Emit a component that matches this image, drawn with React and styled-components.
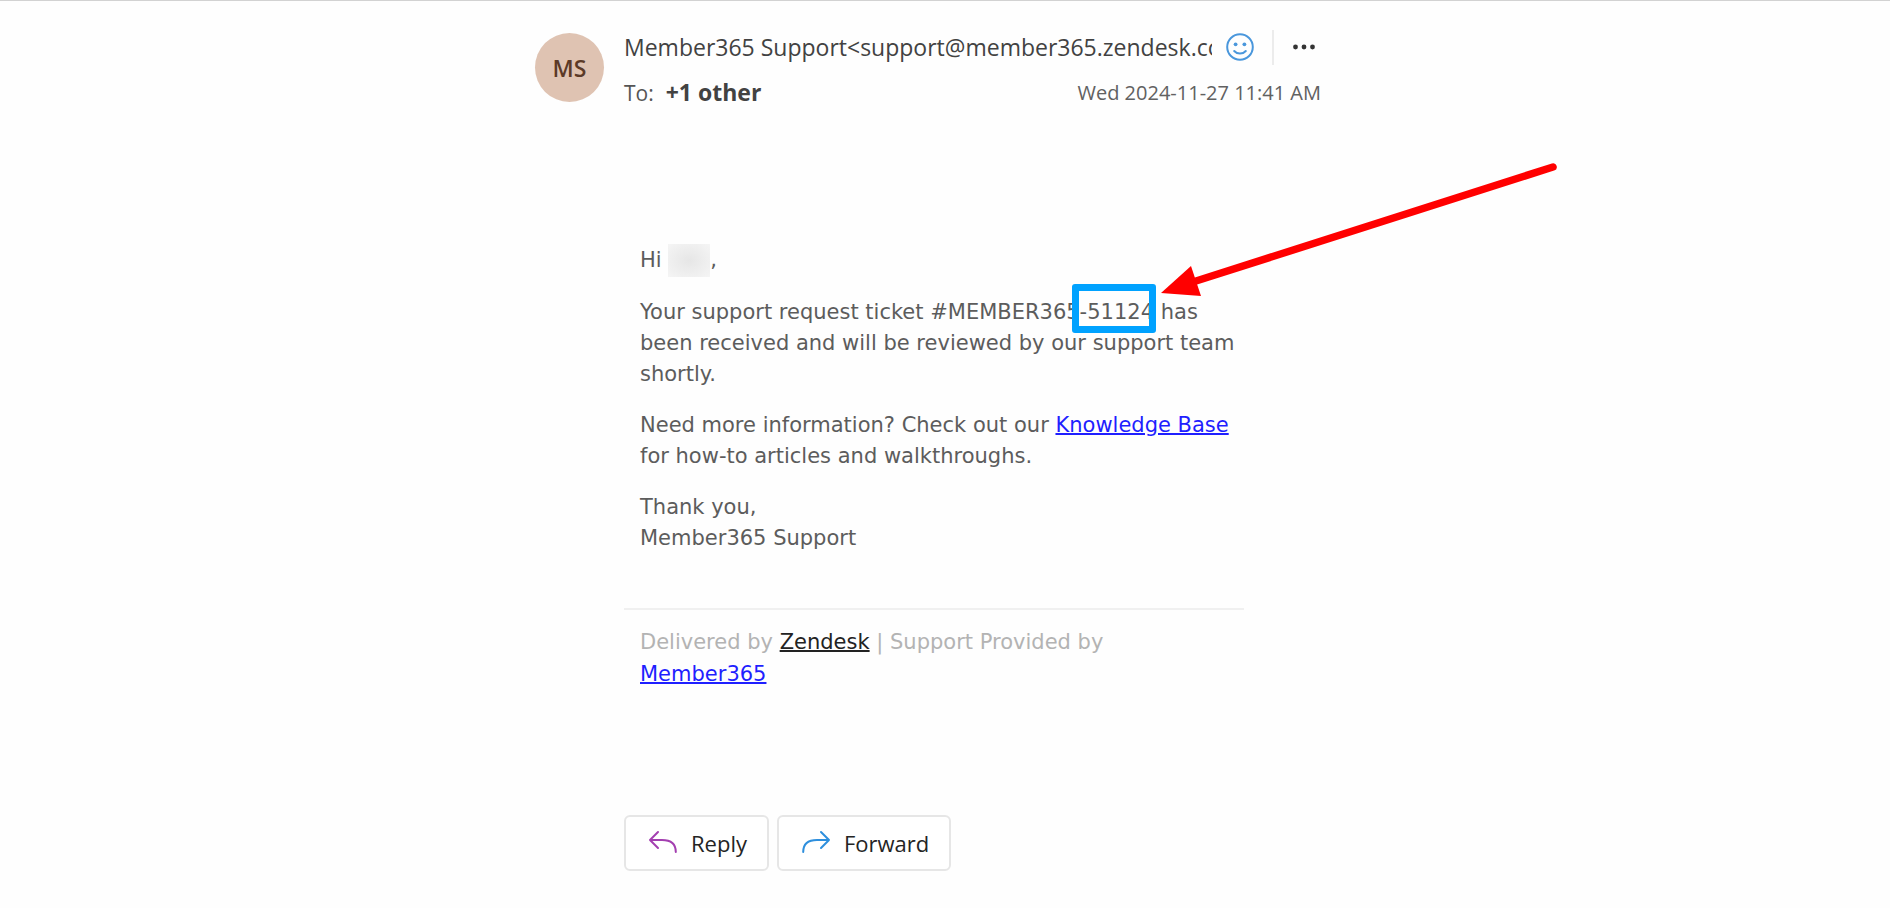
import React from 'react';
import styled, { createGlobalStyle } from 'styled-components';

const GlobalStyle = createGlobalStyle`
  * {
    box-sizing: border-box;
  }
  body {
    margin: 0;
    background-color: #fefefe;
    font-family: "Open Sans", "Noto Sans", sans-serif;
  }
`;

const Page = styled.main`
  display: flex;
  justify-content: center;
  min-height: 100vh;
  padding: 25px 34px 34px 0;
  border-top: 1px solid #d2d2d2;
`;

const Message = styled.article`
  display: grid;
  grid-template-columns: 69px minmax(0, 1fr);
  column-gap: 20px;
  width: 100%;
  max-width: 786px;
  align-content: start;
`;

const Avatar = styled.div`
  display: flex;
  align-items: center;
  justify-content: center;
  width: 69px;
  height: 69px;
  margin-top: 7px;
  border-radius: 50%;
  background-color: #dfc3b2;
  color: #5c3a27;
  font-size: 23px;
  font-weight: 600;
`;

const Header = styled.header`
  display: flex;
  flex-direction: column;
  gap: 3px;
`;

const HeaderRow = styled.div`
  display: flex;
  align-items: center;
  justify-content: space-between;
  height: 42px;
`;

const Sender = styled.h1`
  flex: 1;
  min-width: 0;
  margin: 0;
  overflow: hidden;
  color: #424242;
  font-size: 23px;
  font-weight: 400;
  line-height: 32px;
  white-space: nowrap;
`;

const IconButton = styled.button`
  display: flex;
  padding: 0;
  border: 0;
  background: none;
`;

const Actions = styled.div`
  display: flex;
  align-items: center;
  gap: 18px;
  height: 35px;
  padding-left: 14px;
  padding-right: 5px;
`;

const Divider = styled.span`
  width: 2px;
  height: 35px;
  background-color: #ececec;
`;

const Recipients = styled.p`
  display: flex;
  align-items: baseline;
  gap: 12px;
  margin: 0;
  color: #555555;
  font-size: 21px;

  strong {
    color: #424242;
    font-size: 23px;
  }
`;

const Sent = styled.time`
  color: #616161;
  font-size: 20px;
`;

const Content = styled.div`
  grid-column: 2;
  max-width: 620px;
  margin-top: 132px;
  color: #5c5c5c;
  font-family: "DejaVu Sans", sans-serif;
  font-size: 21px;
  line-height: 31px;
`;

const Paragraph = styled.p`
  margin: 0 8px 20px 16px;
`;

const Redacted = styled.span`
  display: inline-block;
  width: 42px;
  height: 33px;
  margin: -2px 0 0;
  vertical-align: middle;
  background: radial-gradient(#e6e6e6, #f5f5f5);
`;

const Ticket = styled.span`
  position: relative;
`;

const Highlight = styled.span`
  position: absolute;
  inset: -16px -2px -9px -15px;
  border: 7px solid #00a2ff;
  border-radius: 3px;
`;

const Arrow = styled.svg`
  position: absolute;
  left: calc(100% + 7px);
  bottom: 27px;
`;

const Link = styled.a`
  color: ${({ $dark }) => ($dark ? '#222222' : '#1f1fff')};
  text-decoration: underline;
  text-decoration-thickness: 2px;
`;

const Footer = styled.footer`
  margin-top: 54px;
  padding: 16px;
  border-top: 2px solid #f0f0f0;
  color: #b3b3b3;
  line-height: 32px;
`;

const Replies = styled.div`
  display: flex;
  grid-column: 2;
  gap: 8px;
  margin-top: 109px;
`;

const ReplyButton = styled.button`
  display: flex;
  align-items: center;
  gap: 13px;
  height: 56px;
  padding: 0 20px 0 22px;
  border: 2px solid #e6e6e6;
  border-radius: 6px;
  background-color: #ffffff;
  color: #242424;
  font-family: inherit;
  font-size: 22px;
`;

function SmileIcon() {
  return (
    <svg width="28" height="28" viewBox="0 0 28 28" fill="none" stroke="#4a97dc" strokeWidth="2" strokeLinecap="round">
      <circle cx="14" cy="14" r="12.8" />
      <path d="M8.2 18c3 3.4 8.600 3.400 11.600 0" />
      <g fill="#4a97dc" stroke="none">
        <circle cx="9.600" cy="11.300" r="1.900" />
        <circle cx="18.400" cy="11.300" r="1.900" />
      </g>
    </svg>
  );
}

function MoreIcon() {
  return (
    <svg width="24" height="24" viewBox="0 0 24 24" fill="#333333">
      <circle cx="3.500" cy="12" r="2.400" />
      <circle cx="12" cy="12" r="2.400" />
      <circle cx="20.500" cy="12" r="2.400" />
    </svg>
  );
}

function ReplyIcon() {
  return (
    <svg width="30" height="28" viewBox="0 0 30 28" fill="none" stroke="#a33fb0" strokeWidth="2" strokeLinecap="round" strokeLinejoin="round">
      <path d="M10 3 2 11l8 8M2 11H14c8.500 0 13.800 3.600 13.800 12" />
    </svg>
  );
}

function ForwardIcon() {
  return (
    <svg width="30" height="28" viewBox="0 0 30 28" fill="none" stroke="#2e8fdd" strokeWidth="2" strokeLinecap="round" strokeLinejoin="round">
      <path d="M20 3l8 8-8 8M28 11H16C7.500 11 2.200 14.600 2.200 23" />
    </svg>
  );
}

function App() {
  return (
    <Page>
      <GlobalStyle />
      <Message>
        <Avatar>MS</Avatar>
        <Header>
          <HeaderRow>
            <Sender>Member365 Support&lt;support@member365.zendesk.com&gt;</Sender>
            <Actions>
              <IconButton aria-label="React"><SmileIcon /></IconButton>
              <Divider />
              <IconButton aria-label="More actions"><MoreIcon /></IconButton>
            </Actions>
          </HeaderRow>
          <HeaderRow>
            <Recipients>To: <strong>+1 other</strong></Recipients>
            <Sent dateTime="2024-11-27T11:41">Wed 2024-11-27 11:41 AM</Sent>
          </HeaderRow>
        </Header>

        <Content>
          <Paragraph>Hi <Redacted />,</Paragraph>
          <Paragraph>
            Your support request ticket #MEMBER365-
            <Ticket>
              51124
              <Highlight />
              <Arrow width="398" height="138" viewBox="0 0 398 138">
                <path d="M35 122 392 8" stroke="#ff0000" strokeWidth="7.500" strokeLinecap="round" />
                <path d="M0 134 30 107 40 137Z" fill="#ff0000" />
              </Arrow>
            </Ticket>{' '}
            has been received and will be reviewed by our support team shortly.
          </Paragraph>
          <Paragraph>
            Need more information? Check out our <Link href="#knowledge-base">Knowledge Base</Link> for how-to articles and walkthroughs.
          </Paragraph>
          <Paragraph>
            Thank you,<br />
            Member365 Support
          </Paragraph>
          <Footer>
            Delivered by <Link $dark href="#zendesk">Zendesk</Link> | Support Provided by<br />
            <Link href="#member365">Member365</Link>
          </Footer>
        </Content>

        <Replies>
          <ReplyButton><ReplyIcon />Reply</ReplyButton>
          <ReplyButton><ForwardIcon />Forward</ReplyButton>
        </Replies>
      </Message>
    </Page>
  );
}

export default App;
